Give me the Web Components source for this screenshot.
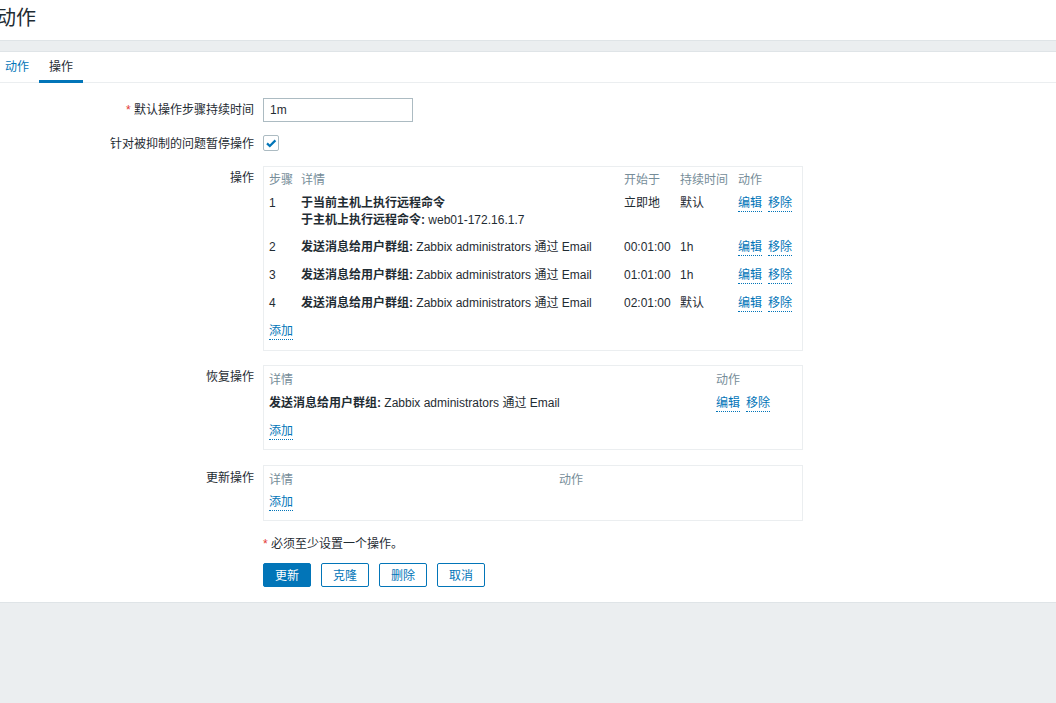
<!DOCTYPE html>
<html lang="zh">
<head>
<meta charset="utf-8">
<title>动作</title>
<style>
	html, body { margin: 0; height: 100%; overflow: hidden; }
	body {
		background: #ebeef0;
		color: #1f2c33;
		font: 12px/17px "Liberation Sans", "Noto Sans CJK SC", sans-serif;
	}
</style>
</head>
<body>
<zbx-page>
	<zbx-tabs slot="tabs"></zbx-tabs>

	<zbx-row label="默认操作步骤持续时间" required top="15" height="24" label-top="4">
		<div style="box-sizing:border-box;width:150px;height:24px;border:1px solid #acbbc2;padding:3px 6px;background:#fff">1m</div>
	</zbx-row>
	<zbx-row label="针对被抑制的问题暂停操作" top="13" height="16" label-top="1">
		<zbx-check></zbx-check>
	</zbx-row>

	<zbx-row label="操作" top="15" label-top="4">
		<zbx-ops cols="32px 323px 56px 58px 1fr" heads="步骤,详情,开始于,持续时间,动作" pad="5" bottom="10">
			<span>1</span>
			<span style="margin-bottom:-1px"><b>于当前主机上执行远程命令</b><br><b>于主机上执行远程命令:</b> web01-172.16.1.7</span>
			<span>立即地</span><span>默认</span><zbx-actions></zbx-actions>

			<span>2</span><span><b>发送消息给用户群组:</b> Zabbix administrators 通过 Email</span>
			<span>00:01:00</span><span>1h</span><zbx-actions></zbx-actions>

			<span>3</span><span><b>发送消息给用户群组:</b> Zabbix administrators 通过 Email</span>
			<span>01:01:00</span><span>1h</span><zbx-actions></zbx-actions>

			<span>4</span><span><b>发送消息给用户群组:</b> Zabbix administrators 通过 Email</span>
			<span>02:01:00</span><span>默认</span><zbx-actions></zbx-actions>
		</zbx-ops>
	</zbx-row>

	<zbx-row label="恢复操作" top="14" label-top="4">
		<zbx-ops cols="447px 1fr" heads="详情,动作" pad="6" bottom="9">
			<span><b>发送消息给用户群组:</b> Zabbix administrators 通过 Email</span>
			<zbx-actions></zbx-actions>
		</zbx-ops>
	</zbx-row>

	<zbx-row label="更新操作" top="15" label-top="5">
		<zbx-ops cols="290px 1fr" heads="详情,动作" pad="6" bottom="9" compact></zbx-ops>
	</zbx-row>

	<zbx-row top="15">
		<div><span style="color:#e33734">*</span> 必须至少设置一个操作。</div>
	</zbx-row>

	<zbx-row top="10">
		<div style="display:flex;gap:10px">
			<zbx-btn primary>更新</zbx-btn>
			<zbx-btn>克隆</zbx-btn>
			<zbx-btn>删除</zbx-btn>
			<zbx-btn>取消</zbx-btn>
		</div>
	</zbx-row>
</zbx-page>

<script>
class ZbxPage extends HTMLElement {
	constructor() {
		super();
		this.attachShadow({ mode: 'open' }).innerHTML = `
			<style>
				:host { display: block; }
				header {
					height: 40px;
					background: #fff;
					border-bottom: 1px solid #dfe4e7;
					overflow: hidden;
				}
				h1 {
					margin: 5px 0 0 -4px;
					font: 400 20px/26px "Liberation Sans", "Noto Sans CJK SC", sans-serif;
					color: #1f2c33;
				}
				main {
					margin-top: 10px;
					height: 552px;
					box-sizing: border-box;
					background: #fff;
					border-top: 1px solid #dfe4e7;
					border-bottom: 1px solid #dfe4e7;
				}
			</style>
			<header><h1>动作</h1></header>
			<main>
				<slot name="tabs"></slot>
				<slot></slot>
			</main>
		`;
	}
}

class ZbxTabs extends HTMLElement {
	constructor() {
		super();
		this.attachShadow({ mode: 'open' }).innerHTML = `
			<style>
				:host {
					display: flex;
					height: 30px;
					border-bottom: 1px solid #ebeef0;
					padding-left: 5px;
				}
				span { display: block; line-height: 30px; color: #0275b8; }
				.on {
					margin-left: 10px;
					padding: 0 10px;
					height: 28px;
					color: #1f2c33;
					border-bottom: 3px solid #0275b8;
				}
			</style>
			<span>动作</span><span class="on">操作</span>
		`;
	}
}

class ZbxRow extends HTMLElement {
	constructor() {
		super();
		const labelTop = this.getAttribute('label-top') || 0;
		const height = this.getAttribute('height');
		const star = this.hasAttribute('required') ? '<i>*</i> ' : '';
		this.attachShadow({ mode: 'open' }).innerHTML = `
			<style>
				:host {
					display: flex;
					margin-top: ${this.getAttribute('top') || 0}px;
					${height ? `height: ${height}px;` : ''}
				}
				.label {
					width: 254px;
					padding-top: ${labelTop}px;
					text-align: right;
					box-sizing: border-box;
					flex: none;
				}
				i { font-style: normal; color: #e33734; }
				.field { margin-left: 9px; flex: none; width: 540px; }
			</style>
			<div class="label">${star}${this.getAttribute('label') || ''}</div>
			<div class="field"><slot></slot></div>
		`;
	}
}

class ZbxCheck extends HTMLElement {
	constructor() {
		super();
		this.attachShadow({ mode: 'open' }).innerHTML = `
			<style>
				:host {
					display: block;
					box-sizing: border-box;
					width: 16px;
					height: 16px;
					border: 1px solid #acbbc2;
					border-radius: 2px;
					background: #fff;
				}
				svg { display: block; }
			</style>
			<svg width="14" height="14" viewBox="0 0 14 14">
				<path d="M3 7.4 L5.8 10 L11.4 4.4" fill="none" stroke="#0275b8" stroke-width="2.2"/>
			</svg>
		`;
	}
}

class ZbxLink extends HTMLElement {
	constructor() {
		super();
		this.attachShadow({ mode: 'open' }).innerHTML = `
			<style>
				:host {
					display: inline-block;
					color: #0275b8;
					line-height: 16px;
					border-bottom: 1px dotted #0275b8;
				}
			</style>
			<slot></slot>
		`;
	}
}

class ZbxActions extends HTMLElement {
	constructor() {
		super();
		this.attachShadow({ mode: 'open' }).innerHTML = `
			<style>
				:host { display: flex; gap: 6px; align-items: flex-start; }
			</style>
			<zbx-link>编辑</zbx-link><zbx-link>移除</zbx-link>
		`;
	}
}

class ZbxOps extends HTMLElement {
	constructor() {
		super();
		const heads = this.getAttribute('heads').split(',');
		const compact = this.hasAttribute('compact');
		this.attachShadow({ mode: 'open' }).innerHTML = `
			<style>
				:host {
					display: block;
					box-sizing: border-box;
					width: 540px;
					border: 1px solid #ebeef0;
					padding: ${this.getAttribute('pad')}px 5px ${this.getAttribute('bottom')}px;
				}
				.grid {
					display: grid;
					grid-template-columns: ${this.getAttribute('cols')};
					row-gap: ${compact ? 0 : 11}px;
				}
				.head { color: #768d99; margin-bottom: -5px; }
				.add { margin-top: ${compact ? 10 : 11}px; }
				::slotted(span) { display: block; }
			</style>
			<div class="grid">
				${heads.map(h => `<div class="head">${h}</div>`).join('')}
				<slot></slot>
			</div>
			<div class="add"><zbx-link>添加</zbx-link></div>
		`;
	}
}

class ZbxBtn extends HTMLElement {
	constructor() {
		super();
		const primary = this.hasAttribute('primary');
		this.attachShadow({ mode: 'open' }).innerHTML = `
			<style>
				:host {
					display: block;
					box-sizing: border-box;
					width: 48px;
					height: 24px;
					line-height: 24px;
					text-align: center;
					border: 1px solid #0275b8;
					border-radius: 2px;
					background: ${primary ? '#0275b8' : '#fff'};
					color: ${primary ? '#fff' : '#0275b8'};
				}
			</style>
			<slot></slot>
		`;
	}
}

customElements.define('zbx-page', ZbxPage);
customElements.define('zbx-tabs', ZbxTabs);
customElements.define('zbx-row', ZbxRow);
customElements.define('zbx-check', ZbxCheck);
customElements.define('zbx-link', ZbxLink);
customElements.define('zbx-actions', ZbxActions);
customElements.define('zbx-ops', ZbxOps);
customElements.define('zbx-btn', ZbxBtn);
</script>
</body>
</html>
